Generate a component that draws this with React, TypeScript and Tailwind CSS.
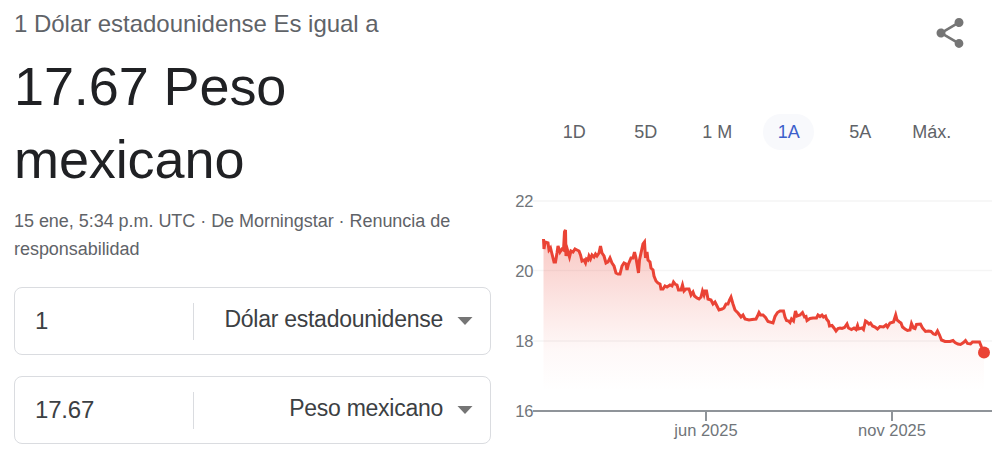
import { useState } from 'react';

const ranges = ['1D', '5D', '1 M', '1A', '5A', 'Máx.'];

const yTicks = [
  { label: '22', y: 21, textY: 27 },
  { label: '20', y: 90.5, textY: 96.5 },
  { label: '18', y: 161, textY: 167 },
  { label: '16', y: 231, textY: 237 },
];

const xTicks = [
  { label: 'jun 2025', x: 201 },
  { label: 'nov 2025', x: 387 },
];

// Rate over the last year, in chart coordinates
const points = [
  [38.5, 59], [39, 69], [40, 62], [43, 63], [44, 70], [45.5, 68], [47, 74], [49, 82], [50.5, 82], [52, 73], [53, 66], [55, 72],
  [57, 69], [58.5, 70], [59.5, 52], [60.5, 50], [61, 76], [62.5, 70], [64.5, 77], [66, 71], [68, 72], [70, 69], [72, 70],
  [74, 71], [75.5, 75], [77, 81], [79, 80], [80.5, 83], [81.5, 79], [83, 80], [84, 76], [85.5, 79], [87, 75], [89, 77],
  [90.5, 74], [92, 76], [94, 73], [95.5, 66], [97, 73], [99, 76], [101, 83], [103, 82], [105, 78], [107, 83], [109, 86],
  [111, 93], [113, 94], [115, 94], [117, 86], [119, 83], [121, 84], [122, 90], [123.5, 84], [126, 78],
  [128, 78], [129.5, 72], [131, 78], [132.5, 87], [133.5, 93], [134.5, 80], [136, 73], [138, 64], [139.5, 62], [140.5, 78],
  [142, 72], [143, 80], [145, 82], [146, 88], [148, 90], [149, 96], [151, 101], [153, 103],
  [155, 104], [156, 109], [158, 109], [160, 106], [162, 107], [165, 105], [167, 106], [168.5, 102], [170, 104],
  [172, 105], [173.5, 110], [176, 110], [177.5, 105], [179, 111], [181, 109], [184, 109], [186, 115], [188, 112],
  [189.5, 116], [192, 118], [194, 119], [196, 117], [197.5, 111], [199, 115], [200, 111], [201.5, 111], [203, 119],
  [206, 120], [208, 124], [210, 122], [212, 126], [214, 130], [217, 129], [219, 128], [221, 124], [223, 124],
  [224.5, 120], [226, 117], [228, 124], [230, 130], [233, 133], [236, 137], [238, 135], [240, 139], [244, 140],
  [247, 139.5], [251, 139], [252.5, 136], [254, 132.5], [255.5, 135], [258, 135], [260.5, 137.5], [263, 141.5],
  [268, 143], [270, 136.5], [272.5, 132.5], [275, 131], [278.5, 131], [280, 137], [281.5, 140.5], [283.5, 141],
  [285, 142.5], [286.5, 139], [288.5, 141], [290.5, 131], [292, 136], [295, 135], [297.5, 132.5], [299.5, 137],
  [301, 136.5], [302, 140.5], [305, 138.5], [308, 138], [311.5, 138], [313, 135], [315, 136.5], [317, 135], [318.5, 137],
  [320.5, 136], [321.5, 139], [323.5, 141.5], [324.5, 146], [327, 145.5], [329, 148], [331, 151], [333, 148.5],
  [335, 148], [337, 148.5], [339.5, 147.5], [342, 144], [343.5, 148], [346.5, 149.5], [349, 148], [351, 149.5],
  [352.5, 145.5], [353.5, 149], [357, 148], [358.5, 149.5], [360.5, 141], [362, 142], [364, 144], [365.5, 143],
  [367.5, 146], [370, 147], [372.5, 149], [375, 146.5], [378.5, 147], [381, 145], [382.5, 147], [385, 143],
  [388.5, 142], [390.7, 135], [392, 140], [394.5, 142], [396, 143], [397.5, 147], [400, 149], [402.5, 150.5],
  [405, 150], [406.5, 143.5], [408.5, 148], [410, 148.5], [411.5, 144.5], [415.5, 144], [417.5, 148], [420.5, 151.5],
  [423.5, 151], [426, 151.5], [428.5, 154], [430.5, 154.5], [432.5, 151], [434.5, 155], [436.5, 160], [440, 161.5],
  [445, 161.5], [448, 160.5], [450, 162.5], [453, 164], [455.5, 164.5], [458.5, 162.5], [460.5, 160.5], [462.5, 163.5],
  [465.5, 164], [467.5, 162], [470, 162], [474.5, 162], [476.5, 167], [479, 172.5],
];

const line = 'M' + points.map((p) => p.join(',')).join(' L');

function CurrencyRow({ amount, currency }: { amount: string; currency: string }) {
  return (
    <div className="flex h-[68px] w-[477px] items-center rounded-lg border border-[#dadce0]">
      <div className="w-[178px] pl-5 text-2xl leading-8 tracking-[-0.2px] text-[#3c4043]">{amount}</div>
      <div className="h-[37px] w-px bg-[#dadce0]" />
      <div className="flex flex-1 items-center justify-end pr-[17px]">
        <span className="pb-1 text-[23px] leading-7 tracking-[-0.26px] text-[#3c4043]">{currency}</span>
        <svg width="16" height="8" viewBox="0 0 16 8" className="ml-3.5">
          <path d="M0.5 0h15L8 8z" fill="#757575" />
        </svg>
      </div>
    </div>
  );
}

function RateChart() {
  return (
    <svg width="500" height="306" viewBox="0 -30 500 306" className="block">
      <defs>
        <linearGradient id="fill" gradientUnits="userSpaceOnUse" x1="0" y1="50" x2="0" y2="211">
          <stop offset="0" stopColor="#ea4335" stopOpacity="0.31" />
          <stop offset="0.5" stopColor="#ea4335" stopOpacity="0.12" />
          <stop offset="0.75" stopColor="#ea4335" stopOpacity="0.035" />
          <stop offset="1" stopColor="#ea4335" stopOpacity="0" />
        </linearGradient>
      </defs>
      {yTicks.slice(0, 3).map((t) => (
        <line key={t.label} x1="28" x2="487" y1={t.y} y2={t.y} stroke="#f5f5f5" strokeWidth="1.5" />
      ))}
      <path d={`${line} L479,211 L38.5,211 Z`} fill="url(#fill)" />
      <path d={line} fill="none" stroke="#ea4335" strokeWidth="3" />
      <circle cx="479" cy="172.5" r="6" fill="#ea4335" />
      <line x1="28" x2="487" y1="231" y2="231" stroke="#8f9499" strokeWidth="2" />
      {yTicks.map((t) => (
        <text key={t.label} x="28.5" y={t.textY} textAnchor="end" fontSize="16.5" fill="#70757a">
          {t.label}
        </text>
      ))}
      {xTicks.map((t) => (
        <g key={t.label}>
          <line x1={t.x} x2={t.x} y1="231" y2="241" stroke="#8f9499" strokeWidth="2" />
          <text x={t.x} y="256" textAnchor="middle" fontSize="16.5" fill="#70757a">
            {t.label}
          </text>
        </g>
      ))}
    </svg>
  );
}

export default function App() {
  const [range, setRange] = useState('1A');

  return (
    <div className="flex h-[456px] w-[1005px] overflow-hidden bg-white font-['Liberation_Sans',Arial,sans-serif]">
      <section className="w-[505px] pl-3.5 pt-2">
        <div className="text-2xl leading-8 tracking-[-0.03px] text-[#5f6368]">1 Dólar estadounidense Es igual a</div>
        <div className="mt-2.5 w-[400px] text-[54px] leading-[73px] tracking-[-0.1px] text-[#202124]">
          17.67 Peso
          <br />
          mexicano
        </div>
        <div className="mt-[11px] text-lg leading-7 tracking-[-0.04px] text-[#5f6368]">
          15 ene, 5:34 p.m. UTC · De Morningstar · Renuncia de
          <br />
          responsabilidad
        </div>
        <div className="mt-6 flex flex-col gap-[21px]">
          <CurrencyRow amount="1" currency="Dólar estadounidense" />
          <CurrencyRow amount="17.67" currency="Peso mexicano" />
        </div>
      </section>

      <section className="w-[500px]">
        <div className="flex h-[114px] justify-end pr-[37px] pt-[15px]">
          <svg width="36" height="36" viewBox="0 0 24 24" fill="#757575">
            <path d="M18 16.08c-.76 0-1.44.3-1.96.77L8.91 12.7c.05-.23.09-.46.09-.7s-.04-.47-.09-.7l7.05-4.11c.54.5 1.25.81 2.04.81 1.66 0 3-1.34 3-3s-1.34-3-3-3-3 1.34-3 3c0 .24.04.47.09.7L8.04 9.81C7.5 9.31 6.79 9 6 9c-1.66 0-3 1.34-3 3s1.34 3 3 3c.79 0 1.5-.31 2.04-.81l7.12 4.16c-.05.21-.08.43-.08.65 0 1.61 1.31 2.92 2.92 2.92s2.92-1.31 2.92-2.92-1.31-2.92-2.92-2.92z" />
          </svg>
        </div>
        <div className="flex h-9 pl-[33.5px]">
          {ranges.map((r) => (
            <div key={r} className="flex w-[71.5px] justify-center">
              <button
                onClick={() => setRange(r)}
                className={`h-9 w-[51px] rounded-full text-lg ${
                  r === range ? 'bg-[#f8f9fc] text-[#3c5fcb]' : 'text-[#5f6368]'
                }`}
              >
                {r}
              </button>
            </div>
          ))}
        </div>
        <RateChart />
      </section>
    </div>
  );
}
